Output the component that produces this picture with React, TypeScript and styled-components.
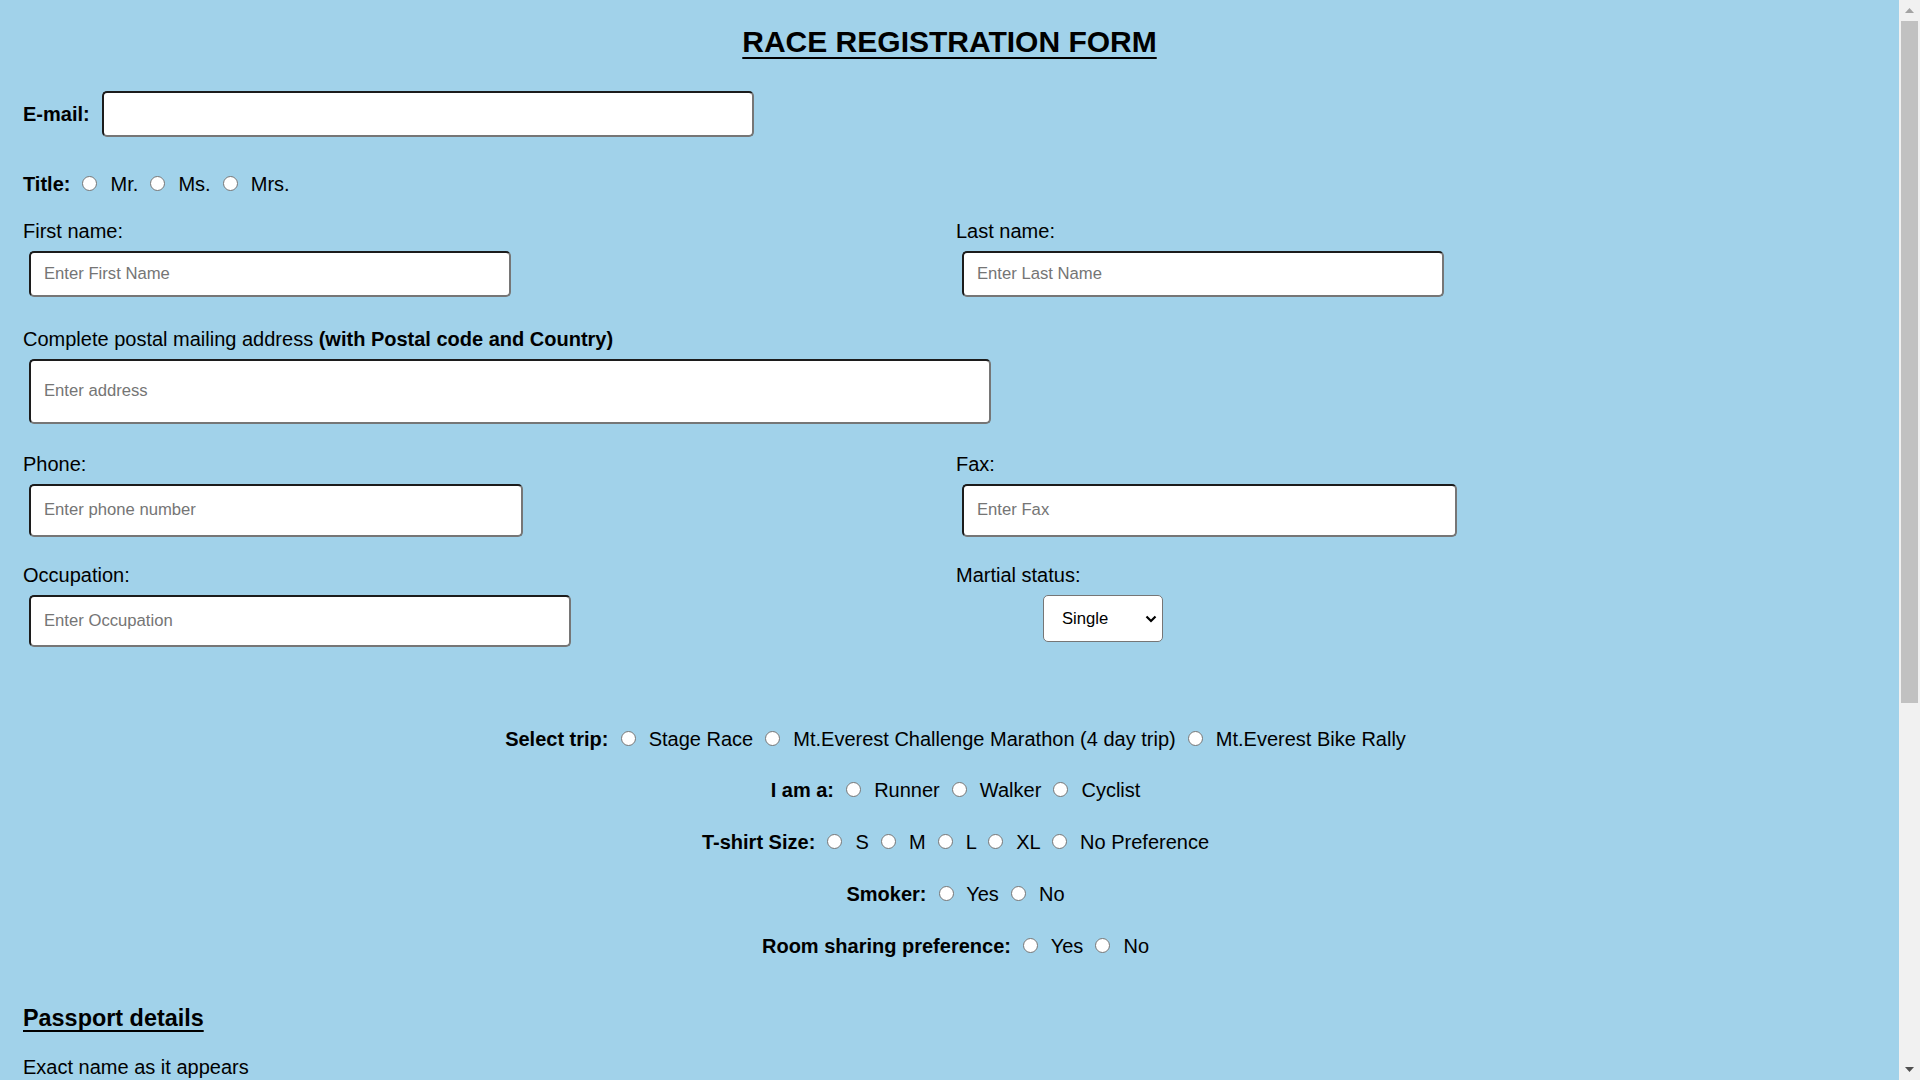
import React from "react";
import styled, { createGlobalStyle } from "styled-components";

const GlobalStyle = createGlobalStyle`
  html, body { margin: 0; padding: 0; }
  body {
    background: #a1d2ea;
    font-family: "Liberation Sans", Arial, sans-serif;
    color: #000;
    overflow: hidden;
  }
  * { box-sizing: border-box; }
`;

const Shell = styled.div`
  display: flex;
  height: 100vh;
  overflow: hidden;
`;

const Page = styled.main`
  flex: 1;
  min-width: 0;
  overflow: hidden;
  padding: 0 23px;
  font-size: 20px;
  line-height: 23px;
`;

const Heading = styled.h2`
  margin: 25px 0 0;
  font-size: 30px;
  line-height: 34px;
  font-weight: 700;
  text-align: center;
  text-decoration: underline;
  text-underline-offset: 5px;
  text-decoration-thickness: 2px;
`;

const EmailRow = styled.div`
  display: flex;
  align-items: center;
  gap: 12px;
  margin-top: 32px;
`;

const Bold = styled.b`
  font-weight: 700;
`;

const TextInput = styled.input<{ $w: number; $h: number }>`
  display: block;
  width: ${(p) => p.$w}px;
  height: ${(p) => p.$h}px;
  margin: 0;
  padding: 0 13px;
  background: #fff;
  border-width: 2px;
  border-style: solid;
  border-color: #1c1c1c #767676 #767676 #1c1c1c;
  border-radius: 5px;
  font-family: "Liberation Sans", Arial, sans-serif;
  font-size: 16.67px;
  color: #000;
  outline: none;
  &::placeholder {
    color: #757575;
  }
`;

const FieldInput = styled(TextInput)`
  margin: 8px 0 0 6px;
`;

const InlineLine = styled.div<{ $mt?: number }>`
  margin-top: ${(p) => p.$mt ?? 0}px;
  white-space: nowrap;
`;

const Radio = styled.input.attrs({ type: "radio" })`
  appearance: none;
  -webkit-appearance: none;
  display: inline-block;
  width: 15px;
  height: 15px;
  margin: 0 7.5px 0 6.5px;
  padding: 0;
  border: 1px solid #767676;
  border-radius: 50%;
  background: #fff;
  vertical-align: baseline;
`;

const FormGrid = styled.div<{ $mt: number }>`
  display: grid;
  grid-template-columns: 933px 1fr;
  align-items: start;
  margin-top: ${(p) => p.$mt}px;
`;

const Field = styled.div<{ $wide?: boolean; $mt?: number }>`
  display: flex;
  flex-direction: column;
  align-items: flex-start;
  grid-column: ${(p) => (p.$wide ? "1 / -1" : "auto")};
  margin-top: ${(p) => p.$mt ?? 0}px;
`;

const Label = styled.label`
  display: block;
  line-height: 23px;
`;

const SelectWrap = styled.span`
  position: relative;
  display: inline-block;
  margin: 8px 0 0 87px;
`;

const Select = styled.select`
  appearance: none;
  -webkit-appearance: none;
  display: block;
  width: 120px;
  height: 47px;
  margin: 0;
  padding: 0 0 0 18px;
  background: #fff;
  border: 1px solid #767676;
  border-radius: 5px;
  font-family: "Liberation Sans", Arial, sans-serif;
  font-size: 16.67px;
  color: #000;
  outline: none;
`;

const Chevron = styled.svg`
  position: absolute;
  right: 6px;
  top: 20px;
  pointer-events: none;
`;

const ChoiceBlock = styled.div`
  display: flex;
  flex-direction: column;
  align-items: center;
  gap: 28.8px;
  margin-top: 80.7px;
  padding-left: 12px;
`;

const SubHeading = styled.h3`
  margin: 47.5px 0 0;
  font-size: 23.4px;
  line-height: 27px;
  font-weight: 700;
  text-decoration: underline;
  text-underline-offset: 4px;
  text-decoration-thickness: 2px;
  display: inline-block;
`;

const Note = styled.p`
  margin: 23.5px 0 0;
  line-height: 23px;
`;

const ScrollTrack = styled.div`
  flex: 0 0 21px;
  width: 21px;
  height: 100%;
  background: #f1f1f1;
  display: flex;
  flex-direction: column;
`;

const ScrollButton = styled.div`
  flex: 0 0 21px;
  display: flex;
  align-items: center;
  justify-content: center;
`;

const Thumb = styled.div`
  flex: 0 0 682px;
  margin: 0 2px;
  background: #c1c1c1;
`;

const Spacer = styled.div`
  flex: 1;
`;

type ChoiceProps = {
  label: string;
  name: string;
  options: string[];
  mt?: number;
};

function ChoiceLine({ label, name, options, mt }: ChoiceProps) {
  return (
    <InlineLine $mt={mt}>
      <Bold>{label}</Bold>
      {options.map((o) => (
        <React.Fragment key={o}>
          {" "}
          <Radio name={name} />
          {" "}
          {o}
        </React.Fragment>
      ))}
    </InlineLine>
  );
}

export default function App() {
  return (
    <>
      <GlobalStyle />
      <Shell>
        <Page>
          <Heading>RACE REGISTRATION FORM</Heading>

          <EmailRow>
            <Bold>E-mail:</Bold>
            <TextInput type="email" $w={652} $h={46} />
          </EmailRow>

          <ChoiceLine label="Title:" name="title" options={["Mr.", "Ms.", "Mrs."]} mt={35.5} />

          <FormGrid $mt={24}>
            <Field>
              <Label>First name:</Label>
              <FieldInput placeholder="Enter First Name" $w={482} $h={46} />
            </Field>
            <Field>
              <Label>Last name:</Label>
              <FieldInput placeholder="Enter Last Name" $w={482} $h={46} />
            </Field>

            <Field $wide $mt={31}>
              <Label>
                Complete postal mailing address <Bold>(with Postal code and Country)</Bold>
              </Label>
              <FieldInput placeholder="Enter address" $w={962} $h={65} />
            </Field>

            <Field $mt={29}>
              <Label>Phone:</Label>
              <FieldInput placeholder="Enter phone number" $w={494} $h={53} />
            </Field>
            <Field $mt={29}>
              <Label>Fax:</Label>
              <FieldInput placeholder="Enter Fax" $w={495} $h={53} />
            </Field>

            <Field $mt={27.5}>
              <Label>Occupation:</Label>
              <FieldInput placeholder="Enter Occupation" $w={542} $h={52} />
            </Field>
            <Field $mt={27.5}>
              <Label>Martial status:</Label>
              <SelectWrap>
                <Select defaultValue="Single">
                  <option>Single</option>
                  <option>Married</option>
                  <option>Divorced</option>
                  <option>Widowed</option>
                </Select>
                <Chevron width="12" height="8" viewBox="0 0 12 8">
                  <path d="M1.5 1.5 L6 6 L10.5 1.5" fill="none" stroke="#000" strokeWidth="2.2" />
                </Chevron>
              </SelectWrap>
            </Field>
          </FormGrid>

          <ChoiceBlock>
            <ChoiceLine
              label="Select trip:"
              name="trip"
              options={["Stage Race", "Mt.Everest Challenge Marathon (4 day trip)", "Mt.Everest Bike Rally"]}
            />
            <ChoiceLine label="I am a:" name="role" options={["Runner", "Walker", "Cyclist"]} />
            <ChoiceLine label="T-shirt Size:" name="size" options={["S", "M", "L", "XL", "No Preference"]} />
            <ChoiceLine label="Smoker:" name="smoker" options={["Yes", "No"]} />
            <ChoiceLine label="Room sharing preference:" name="room" options={["Yes", "No"]} />
          </ChoiceBlock>

          <SubHeading>Passport details</SubHeading>
          <Note>Exact name as it appears</Note>
        </Page>

        <ScrollTrack>
          <ScrollButton>
            <svg width="9" height="5" viewBox="0 0 9 5">
              <path d="M0 5 L4.5 0 L9 5 Z" fill="#a3a3a3" />
            </svg>
          </ScrollButton>
          <Thumb />
          <Spacer />
          <ScrollButton>
            <svg width="9" height="5" viewBox="0 0 9 5">
              <path d="M0 0 L4.5 5 L9 0 Z" fill="#505050" />
            </svg>
          </ScrollButton>
        </ScrollTrack>
      </Shell>
    </>
  );
}
